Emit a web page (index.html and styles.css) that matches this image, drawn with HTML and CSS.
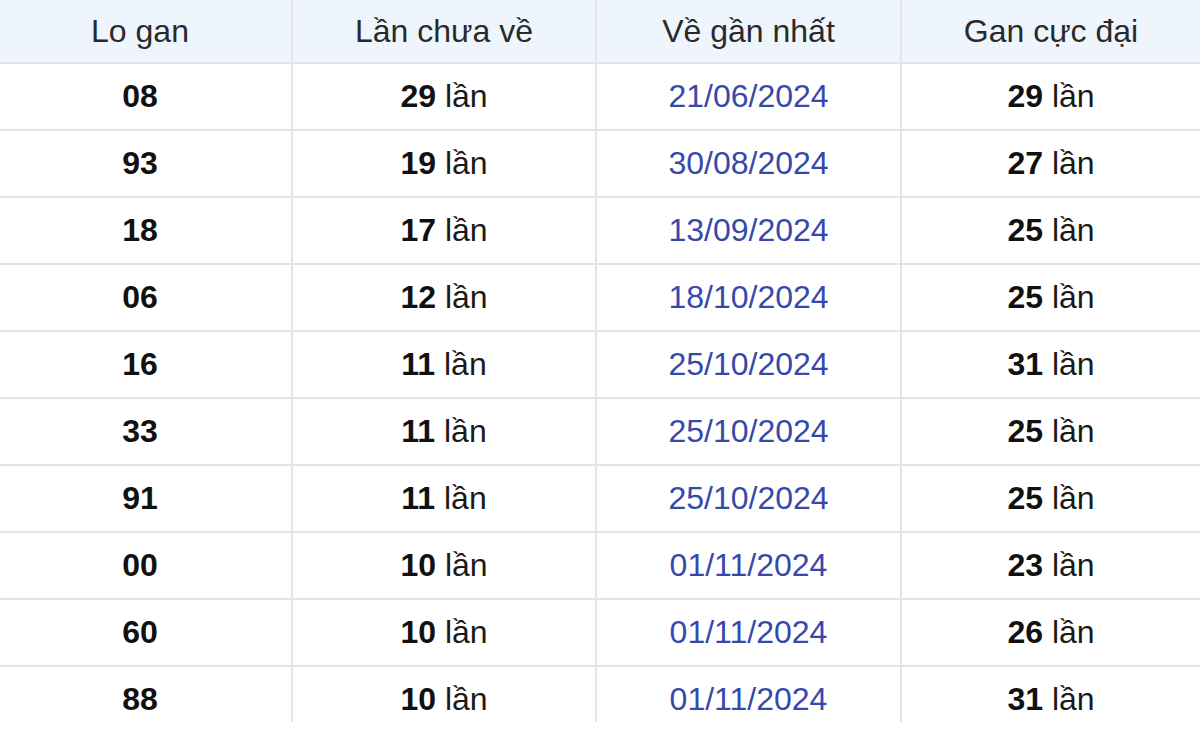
FILE: index.html
```html
<!DOCTYPE html>
<html lang="vi">
<head>
<meta charset="utf-8">
<title>Lo gan</title>
<link rel="stylesheet" href="styles.css">
</head>
<body>
<div class="frame">
<table class="gan">
<colgroup>
<col class="c1"><col class="c2"><col class="c3"><col class="c4">
</colgroup>
<thead>
<tr><th>Lo gan</th><th>Lần chưa về</th><th>Về gần nhất</th><th>Gan cực đại</th></tr>
</thead>
<tbody>
<tr><td><b>08</b></td><td><b>29</b> lần</td><td class="date">21/06/2024</td><td><b>29</b> lần</td></tr>
<tr><td><b>93</b></td><td><b>19</b> lần</td><td class="date">30/08/2024</td><td><b>27</b> lần</td></tr>
<tr><td><b>18</b></td><td><b>17</b> lần</td><td class="date">13/09/2024</td><td><b>25</b> lần</td></tr>
<tr><td><b>06</b></td><td><b>12</b> lần</td><td class="date">18/10/2024</td><td><b>25</b> lần</td></tr>
<tr><td><b>16</b></td><td><b>11</b> lần</td><td class="date">25/10/2024</td><td><b>31</b> lần</td></tr>
<tr><td><b>33</b></td><td><b>11</b> lần</td><td class="date">25/10/2024</td><td><b>25</b> lần</td></tr>
<tr><td><b>91</b></td><td><b>11</b> lần</td><td class="date">25/10/2024</td><td><b>25</b> lần</td></tr>
<tr><td><b>00</b></td><td><b>10</b> lần</td><td class="date">01/11/2024</td><td><b>23</b> lần</td></tr>
<tr><td><b>60</b></td><td><b>10</b> lần</td><td class="date">01/11/2024</td><td><b>26</b> lần</td></tr>
<tr><td><b>88</b></td><td><b>10</b> lần</td><td class="date">01/11/2024</td><td><b>31</b> lần</td></tr>
</tbody>
</table>
</div>
</body>
</html>
```
FILE: styles.css
```css
html, body {
  margin: 0;
  padding: 0;
  background: #ffffff;
}
.frame {
  width: 1200px;
  height: 722px;
  overflow: hidden;
}
.gan {
  width: 1211px;
  margin-left: -11px;
  border-collapse: collapse;
  table-layout: fixed;
  font-family: "Liberation Sans", Arial, sans-serif;
  font-size: 32px;
  color: #222222;
}
.c1 { width: 303px; }
.c2 { width: 304px; }
.c3 { width: 305px; }
.c4 { width: 299px; }
.gan th,
.gan td {
  border: 2px solid #e3e4e6;
  text-align: center;
  padding: 0;
}
.gan tr > :first-child { border-left: none; }
.gan tr > :last-child { border-right: none; }
.gan thead th {
  border-top: none;
  height: 62px;
  background: #eef5fd;
  font-weight: normal;
  color: #2a2a2a;
}
.gan tbody td {
  height: 65px;
  color: #1a1a1a;
}
.gan b {
  font-weight: bold;
  color: #111111;
}
.gan td.date {
  color: #3649ab;
}
```
